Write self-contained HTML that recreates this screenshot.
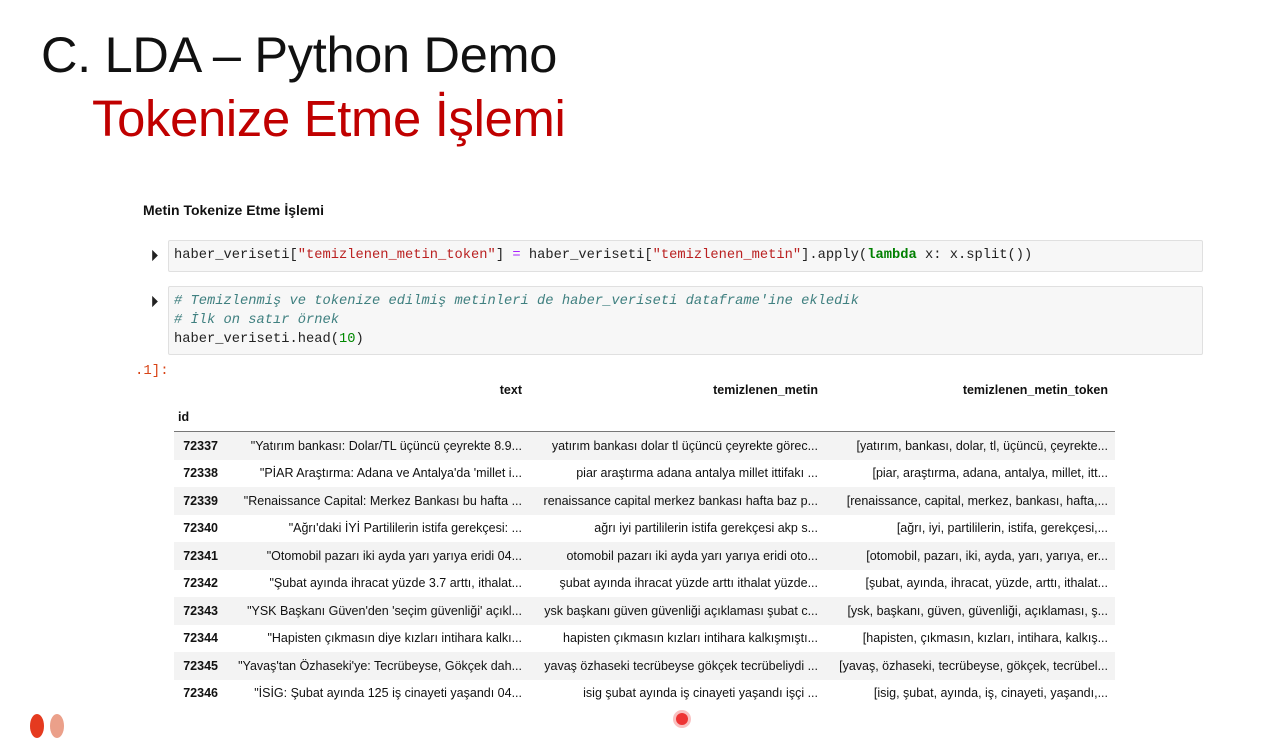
<!DOCTYPE html>
<html><head><meta charset="utf-8"><style>
body{margin:0;width:1267px;height:729px;background:#fff;position:relative;overflow:hidden;font-family:"Liberation Sans",Arial,sans-serif}
.t1{position:absolute;left:41px;top:26px;font-size:50px;color:#111;letter-spacing:-0.3px;transform-origin:0 0;transform:scaleX(1.01)}
.t2{position:absolute;left:92px;top:89px;font-size:51px;color:#c00000;letter-spacing:-0.3px;transform-origin:0 0;transform:scaleX(0.995)}
.h{position:absolute;left:143px;top:202px;font-size:14px;font-weight:bold;color:#111}
.cell{position:absolute;left:168px;width:1035px;background:#f7f7f7;border:1px solid #e0e0e0;border-radius:2px;font-family:"Liberation Mono",monospace;font-size:13.75px;color:#222;line-height:19px;padding:5px 5px;box-sizing:border-box;white-space:pre}
.run{position:absolute;left:151px;font-size:14px;font-weight:bold;color:#222}
.s{color:#ba2121}.k{color:#008000;font-weight:bold}.o{color:#aa22ff}.c{color:#408080;font-style:italic}.n{color:#080}
.out{position:absolute;left:135px;top:363px;color:#d84315;font-family:"Liberation Mono",monospace;font-size:14px}
table{position:absolute;left:174px;top:376px;border-collapse:collapse;font-size:12.5px;color:#111;width:941px}
td,th{text-align:right;padding:0 7px;height:27.5px;white-space:nowrap}
th{font-weight:bold}
tbody tr:nth-child(odd){background:#f3f3f3}
tbody td:first-child{font-weight:bold}
thead tr.h2 th{border-bottom:1px solid #777}
</style></head><body>
<div class="t1">C. LDA – Python Demo</div>
<div class="t2">Tokenize Etme İşlemi</div>
<div class="h">Metin Tokenize Etme İşlemi</div>
<div class="run" style="top:247px">⏵</div>
<div class="cell" style="top:240px;height:32px">haber_veriseti[<span class="s">"temizlenen_metin_token"</span>] <span class="o">=</span> haber_veriseti[<span class="s">"temizlenen_metin"</span>].apply(<span class="k">lambda</span> x: x.split())</div>
<div class="run" style="top:293px">⏵</div>
<div class="cell" style="top:286px;height:69px"><span class="c"># Temizlenmiş ve tokenize edilmiş metinleri de haber_veriseti dataframe'ine ekledik</span>
<span class="c"># İlk on satır örnek</span>
haber_veriseti.head(<span class="n">10</span>)</div>
<div class="out">.1]:</div>
<table>
<thead><tr><th style="width:37px"></th><th style="width:290px">text</th><th style="width:282px">temizlenen_metin</th><th>temizlenen_metin_token</th></tr>
<tr class="h2"><th style="text-align:left;padding-left:4px">id</th><th></th><th></th><th></th></tr></thead>
<tbody>
<tr><td>72337</td><td>"Yatırım bankası: Dolar/TL üçüncü çeyrekte 8.9...</td><td>yatırım bankası dolar tl üçüncü çeyrekte görec...</td><td>[yatırım, bankası, dolar, tl, üçüncü, çeyrekte...</td></tr>
<tr><td>72338</td><td>"PİAR Araştırma: Adana ve Antalya'da 'millet i...</td><td>piar araştırma adana antalya millet ittifakı ...</td><td>[piar, araştırma, adana, antalya, millet, itt...</td></tr>
<tr><td>72339</td><td>"Renaissance Capital: Merkez Bankası bu hafta ...</td><td>renaissance capital merkez bankası hafta baz p...</td><td>[renaissance, capital, merkez, bankası, hafta,...</td></tr>
<tr><td>72340</td><td>"Ağrı'daki İYİ Partililerin istifa gerekçesi: ...</td><td>ağrı iyi partililerin istifa gerekçesi akp s...</td><td>[ağrı, iyi, partililerin, istifa, gerekçesi,...</td></tr>
<tr><td>72341</td><td>"Otomobil pazarı iki ayda yarı yarıya eridi 04...</td><td>otomobil pazarı iki ayda yarı yarıya eridi oto...</td><td>[otomobil, pazarı, iki, ayda, yarı, yarıya, er...</td></tr>
<tr><td>72342</td><td>"Şubat ayında ihracat yüzde 3.7 arttı, ithalat...</td><td>şubat ayında ihracat yüzde arttı ithalat yüzde...</td><td>[şubat, ayında, ihracat, yüzde, arttı, ithalat...</td></tr>
<tr><td>72343</td><td>"YSK Başkanı Güven'den 'seçim güvenliği' açıkl...</td><td>ysk başkanı güven güvenliği açıklaması şubat c...</td><td>[ysk, başkanı, güven, güvenliği, açıklaması, ş...</td></tr>
<tr><td>72344</td><td>"Hapisten çıkmasın diye kızları intihara kalkı...</td><td>hapisten çıkmasın kızları intihara kalkışmıştı...</td><td>[hapisten, çıkmasın, kızları, intihara, kalkış...</td></tr>
<tr><td>72345</td><td>"Yavaş'tan Özhaseki'ye: Tecrübeyse, Gökçek dah...</td><td>yavaş özhaseki tecrübeyse gökçek tecrübeliydi ...</td><td>[yavaş, özhaseki, tecrübeyse, gökçek, tecrübel...</td></tr>
<tr><td>72346</td><td>"İSİG: Şubat ayında 125 iş cinayeti yaşandı 04...</td><td>isig şubat ayında iş cinayeti yaşandı işçi ...</td><td>[isig, şubat, ayında, iş, cinayeti, yaşandı,...</td></tr>
</tbody></table>
<div style="position:absolute;left:30px;top:714px;width:14px;height:24px;border-radius:50%;background:#e53a1f"></div>
<div style="position:absolute;left:50px;top:714px;width:14px;height:24px;border-radius:50%;background:#eba08a"></div>
<div style="position:absolute;left:676px;top:713px;width:12px;height:12px;border-radius:50%;background:#e33;box-shadow:0 0 0 3px #f9c0c0"></div>
</body></html>
